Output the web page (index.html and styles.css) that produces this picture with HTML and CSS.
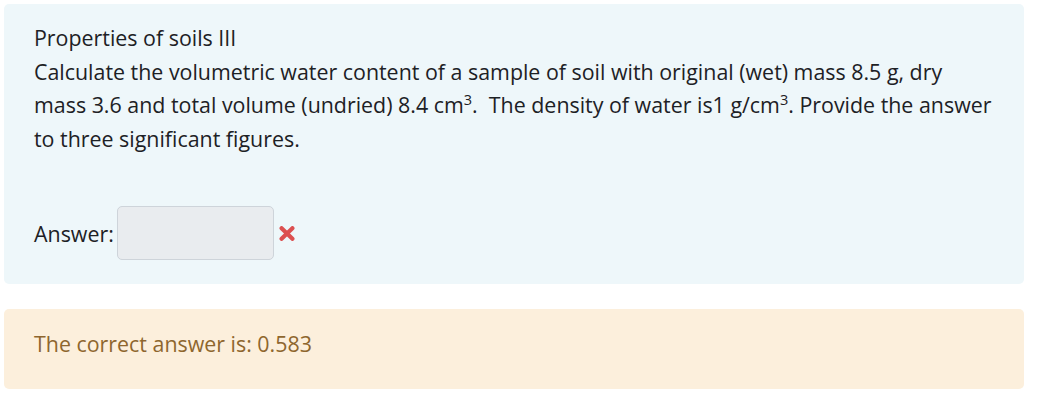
FILE: index.html
```html
<!DOCTYPE html>
<html lang="en">
<head>
<meta charset="utf-8">
<title>Properties of soils III</title>
<link rel="stylesheet" href="styles.css">
</head>
<body>
<div class="que">
  <div class="formulation">
    <div class="qtext">
      <p>Properties of soils III<br>Calculate the volumetric water content of a sample of soil with original (wet) mass 8.5 g, dry mass 3.6 and total volume (undried) 8.4 cm<sup>3</sup>.&nbsp; The density of water is1 g/cm<sup>3</sup>. Provide the answer to three significant figures.</p>
    </div>
    <div class="ablock">
      <label class="answer-label" for="ans">Answer:</label>
      <input class="answer-input" id="ans" type="text" readonly>
      <svg class="icon-wrong" viewBox="0 0 16 15" width="16" height="15" aria-label="Incorrect">
        <path d="M2.6 2.2 L13.4 12.8 M13.4 2.2 L2.6 12.8" stroke="#dc5050" stroke-width="4.2" stroke-linecap="round" fill="none"/>
      </svg>
    </div>
  </div>
  <div class="outcome">
    <p class="rightanswer">The correct answer is: 0.583</p>
  </div>
</div>
</body>
</html>
```
FILE: styles.css
```css
html, body {
  margin: 0;
  padding: 0;
  background: #ffffff;
}
body {
  font-family: "Open Sans", "Noto Sans", sans-serif;
  font-size: 21.4px;
  line-height: 33.6px;
  color: #1d2125;
}
.que {
  padding: 4px 19px 0 4px;
  display: flex;
  flex-direction: column;
  gap: 25px;
}
.formulation {
  background: #eef7fa;
  border-radius: 5px;
  padding: 17px 30px 24px 30px;
  height: 280px;
  box-sizing: border-box;
}
.qtext p {
  margin: 0;
}
.qtext sup {
  font-size: 0.68em;
  line-height: 1;
  vertical-align: 0.58em;
}
.ablock {
  margin-top: 51px;
  display: flex;
  align-items: center;
  gap: 3px;
}
.answer-input {
  width: 157px;
  height: 54px;
  box-sizing: border-box;
  background: #e9ecef;
  border: 1px solid #ced4da;
  border-radius: 5px;
  margin: 0;
  padding: 0 12px;
  font: inherit;
  outline: none;
}
.icon-wrong {
  margin-left: 2px;
  display: block;
}
.outcome {
  background: #fcefdc;
  border-radius: 5px;
  padding: 18px 30px 28px 30px;
  height: 80px;
  box-sizing: border-box;
  color: #8e662e;
}
.rightanswer {
  margin: 0;
}
```
